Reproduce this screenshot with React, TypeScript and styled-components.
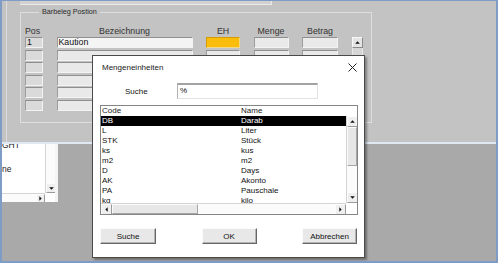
import React from 'react';
import styled, { createGlobalStyle } from 'styled-components';

const GlobalStyle = createGlobalStyle`
  html, body {
    margin: 0;
    padding: 0;
    background: #a9a9a9;
  }
  body {
    width: 498px;
    height: 263px;
    overflow: hidden;
    font-family: "Liberation Sans", Arial, sans-serif;
  }
`;

const Screen = styled.div`
  position: relative;
  box-sizing: border-box;
  width: 498px;
  height: 263px;
  background: #a9a9a9;
  border-style: solid;
  border-color: #7f9cc6;
  border-width: 1px 2px 2px 2px;
  overflow: hidden;
  display: flex;
  flex-direction: column;
`;

const FormPanel = styled.div`
  flex-shrink: 0;
  height: 141px;
  background: #c3c3c3;
  border-bottom: 2px solid #dfe8f3;
  padding-left: 4px;
  display: flex;
`;

const FormFrame = styled.div`
  flex: 1;
  border-left: 1px solid #dcdcdc;
  padding-left: 13px;
  display: flex;
  flex-direction: column;
`;

const TopStub = styled.div`
  width: 251px;
  height: 3px;
  background: #d2d2d2;
  border-bottom: 1px solid #e9e9e9;
  border-right: 1px solid #e9e9e9;
`;

const GroupBox = styled.fieldset`
  box-sizing: border-box;
  width: 352px;
  height: 115px;
  margin: 3px 0 0 0;
  padding: 8.5px 0 0 4px;
  border: 1px solid #dedede;
  min-width: 0;
`;

const GroupLegend = styled.legend`
  margin-left: 14px;
  padding: 0 3px;
  font-size: 7.2px;
  line-height: 8px;
  color: #2b2b2b;
`;

const PositionGrid = styled.div`
  display: grid;
  grid-template-columns: 18px 136px 34px 35px 36px 11px;
  grid-template-rows: 11px repeat(6, 11px);
  column-gap: 13.5px;
  row-gap: 1.5px;
`;

const ColumnLabel = styled.div<{ $align?: 'left' | 'center' }>`
  font-size: 8.8px;
  line-height: 10px;
  color: #333;
  text-align: ${p => p.$align ?? 'center'};
  align-self: end;
  white-space: nowrap;
`;

const Cell = styled.div<{ $tone?: 'pos' | 'plain' | 'light' | 'orange' }>`
  box-sizing: border-box;
  height: 11px;
  font-size: 8.8px;
  line-height: 9px;
  padding-left: 1px;
  color: #111;
  background: ${p =>
    p.$tone === 'orange' ? '#fbbd0c' : p.$tone === 'pos' ? '#dadada' : p.$tone === 'light' ? '#f4f4f4' : '#e9e9e9'};
  border-style: solid;
  border-width: 1px;
  border-color: ${p =>
    p.$tone === 'orange' ? '#d49c00 #f3d88a #f3d88a #d49c00' : '#8f8f8f #f3f3f3 #f3f3f3 #9d9d9d'};
`;

const MiniScroll = styled.div`
  grid-column: 6;
  grid-row: 2 / span 6;
  display: flex;
  flex-direction: column;
`;

const MiniButton = styled.div`
  box-sizing: border-box;
  height: 11px;
  background: #e4e4e4;
  border: 1px solid;
  border-color: #f6f6f6 #8a8a8a #8a8a8a #f6f6f6;
  display: flex;
  align-items: center;
  justify-content: center;
`;

const MiniTrack = styled.div`
  flex: 1;
  background: #d6d6d6;
  border-left: 1px solid #e8e8e8;
  border-right: 1px solid #e8e8e8;
`;

const LowerArea = styled.div`
  flex: 1;
  display: flex;
  align-items: flex-start;
`;

const SideList = styled.div`
  box-sizing: border-box;
  width: 56px;
  height: 58px;
  background: #fff;
  border-right: 3px solid #f4f4f4;
  display: grid;
  grid-template-columns: 1fr 10px;
  grid-template-rows: 1fr 9px;
  overflow: hidden;
`;

const SideListText = styled.div`
  font-size: 8.5px;
  line-height: 10px;
  color: #222;
  margin-top: -4px;
  display: flex;
  flex-direction: column;
  gap: 14px;
`;

const ScrollBar = styled.div<{ $vertical?: boolean }>`
  box-sizing: border-box;
  display: flex;
  flex-direction: ${p => (p.$vertical ? 'column' : 'row')};
  background: #fff;
  ${p => (p.$vertical ? 'border-left: 1px solid #d4d4d4;' : 'border-top: 1px solid #d4d4d4;')}
`;

const ScrollArrow = styled.div<{ $size: number }>`
  box-sizing: border-box;
  flex-shrink: 0;
  width: ${p => p.$size}px;
  height: ${p => p.$size}px;
  background: #efefef;
  border: 1px solid;
  border-color: #fdfdfd #9b9b9b #9b9b9b #fdfdfd;
  display: flex;
  align-items: center;
  justify-content: center;
`;

const ScrollThumb = styled.div<{ $vertical?: boolean }>`
  box-sizing: border-box;
  ${p => (p.$vertical ? 'height: 39px;' : 'width: 86px;')}
  background: #e7e7e7;
  border: 1px solid;
  border-color: #fafafa #a6a6a6 #a6a6a6 #fafafa;
`;

const ScrollGap = styled.div`
  flex: 1;
  background: #fbfbfb;
`;

const Corner = styled.div`
  background: #fff;
`;

const Dialog = styled.div`
  position: absolute;
  left: 90px;
  top: 54px;
  box-sizing: border-box;
  width: 273px;
  height: 203px;
  background: #fff;
  border: 1px solid #4a4a4a;
  box-shadow: 2px 2px 2px rgba(0, 0, 0, 0.35);
  display: flex;
  flex-direction: column;
  font-size: 8px;
  color: #111;
`;

const TitleBar = styled.div`
  height: 22px;
  flex-shrink: 0;
  display: flex;
  align-items: center;
  justify-content: space-between;
  padding: 0 7px 0 9px;
`;

const Title = styled.span`
  font-size: 8px;
  color: #1a1a1a;
`;

const SearchRow = styled.div`
  margin-top: 5px;
  padding-left: 32px;
  display: flex;
  align-items: center;
`;

const SearchLabel = styled.label`
  width: 52px;
  font-size: 8px;
`;

const SearchInput = styled.div`
  box-sizing: border-box;
  width: 141px;
  height: 16px;
  border-style: solid;
  border-width: 2px 1px 1px 1px;
  border-color: #a3a3a3 #e2e2e2 #e2e2e2 #b2b2b2;
  font-size: 8px;
  line-height: 12px;
  padding-left: 2px;
`;

const ListView = styled.div`
  box-sizing: border-box;
  margin: 6px 0 0 7px;
  width: 258px;
  height: 110px;
  border: 1px solid #858585;
  display: grid;
  grid-template-columns: 1fr 11px;
  grid-template-rows: 10px 1fr 11px;
  overflow: hidden;
`;

const ListHeader = styled.div`
  grid-column: 1 / span 2;
  display: flex;
  font-size: 8px;
  line-height: 9px;
  color: #222;
`;

const ListBody = styled.div`
  overflow: hidden;
`;

const ListRow = styled.div<{ $selected?: boolean }>`
  display: flex;
  height: 10px;
  font-size: 8px;
  line-height: 10px;
  background: ${p => (p.$selected ? '#000' : 'transparent')};
  color: ${p => (p.$selected ? '#fff' : '#111')};
`;

const CodeCol = styled.span`
  width: 139px;
  padding-left: 1px;
  flex-shrink: 0;
`;

const NameCol = styled.span`
  flex: 1;
`;

const ButtonRow = styled.div`
  margin-top: 13px;
  padding: 0 7px;
  display: flex;
  justify-content: space-between;
`;

const DialogButton = styled.button<{ $width: number }>`
  box-sizing: border-box;
  width: ${p => p.$width}px;
  height: 16px;
  padding: 0;
  font-family: "Liberation Sans", Arial, sans-serif;
  font-size: 8px;
  color: #111;
  background: #e8e8e8;
  border: 1px solid;
  border-color: #fbfbfb #666 #666 #fbfbfb;
  box-shadow: inset -1px -1px 0 #b4b4b4;
`;

type Dir = 'up' | 'down' | 'left' | 'right';

const Arrow = ({ dir }: { dir: Dir }) => {
  const points: Record<Dir, string> = {
    up: '0,4 3.5,0.5 7,4',
    down: '0,0.5 3.5,4 7,0.5',
    left: '4,0 0.5,3.5 4,7',
    right: '0.5,0 4,3.5 0.5,7',
  };
  const vertical = dir === 'up' || dir === 'down';
  return (
    <svg width={vertical ? 5 : 3} height={vertical ? 3 : 5} viewBox={vertical ? '0 0 7 4.5' : '0 0 4.5 7'}>
      <polygon points={points[dir]} fill="#111" />
    </svg>
  );
};

const CloseIcon = () => (
  <svg width="9" height="9" viewBox="0 0 9 9">
    <path d="M0.5 0.5 L8.5 8.5 M8.5 0.5 L0.5 8.5" stroke="#222" strokeWidth="1" />
  </svg>
);

const units = [
  { code: 'DB', name: 'Darab' },
  { code: 'L', name: 'Liter' },
  { code: 'STK', name: 'Stück' },
  { code: 'ks', name: 'kus' },
  { code: 'm2', name: 'm2' },
  { code: 'D', name: 'Days' },
  { code: 'AK', name: 'Akonto' },
  { code: 'PA', name: 'Pauschale' },
  { code: 'kg', name: 'kilo' },
];

const rows = [0, 1, 2, 3, 4, 5];

const App = () => {
  return (
    <>
      <GlobalStyle />
      <Screen>
        <FormPanel>
          <FormFrame>
            <TopStub />
            <GroupBox>
              <GroupLegend>Barbeleg Postion</GroupLegend>
              <PositionGrid>
                <ColumnLabel $align="left">Pos</ColumnLabel>
                <ColumnLabel>Bezeichnung</ColumnLabel>
                <ColumnLabel>EH</ColumnLabel>
                <ColumnLabel>Menge</ColumnLabel>
                <ColumnLabel>Betrag</ColumnLabel>
                <div />
                {rows.map(row => (
                  <React.Fragment key={row}>
                    <Cell $tone="pos" style={{ gridRow: row + 2, gridColumn: 1 }}>
                      {row === 0 ? '1' : ''}
                    </Cell>
                    <Cell $tone={row === 0 ? 'light' : 'plain'} style={{ gridRow: row + 2, gridColumn: 2 }}>
                      {row === 0 ? 'Kaution' : ''}
                    </Cell>
                    <Cell $tone={row === 0 ? 'orange' : 'plain'} style={{ gridRow: row + 2, gridColumn: 3 }} />
                    <Cell style={{ gridRow: row + 2, gridColumn: 4 }} />
                    <Cell style={{ gridRow: row + 2, gridColumn: 5 }} />
                  </React.Fragment>
                ))}
                <MiniScroll>
                  <MiniButton>
                    <Arrow dir="up" />
                  </MiniButton>
                  <MiniTrack />
                </MiniScroll>
              </PositionGrid>
            </GroupBox>
          </FormFrame>
        </FormPanel>

        <LowerArea>
          <SideList>
            <SideListText>
              <span>GHT</span>
              <span>ne</span>
            </SideListText>
            <ScrollBar $vertical>
              <ScrollGap />
              <ScrollArrow $size={10}>
                <Arrow dir="down" />
              </ScrollArrow>
            </ScrollBar>
            <ScrollBar>
              <ScrollGap />
              <ScrollArrow $size={9}>
                <Arrow dir="right" />
              </ScrollArrow>
            </ScrollBar>
            <Corner />
          </SideList>
        </LowerArea>

        <Dialog>
          <TitleBar>
            <Title>Mengeneinheiten</Title>
            <CloseIcon />
          </TitleBar>
          <SearchRow>
            <SearchLabel>Suche</SearchLabel>
            <SearchInput>%</SearchInput>
          </SearchRow>
          <ListView>
            <ListHeader>
              <CodeCol>Code</CodeCol>
              <NameCol>Name</NameCol>
            </ListHeader>
            <ListBody>
              {units.map((unit, index) => (
                <ListRow key={unit.code} $selected={index === 0}>
                  <CodeCol>{unit.code}</CodeCol>
                  <NameCol>{unit.name}</NameCol>
                </ListRow>
              ))}
            </ListBody>
            <ScrollBar $vertical>
              <ScrollArrow $size={11}>
                <Arrow dir="up" />
              </ScrollArrow>
              <ScrollThumb $vertical />
              <ScrollGap />
              <ScrollArrow $size={11}>
                <Arrow dir="down" />
              </ScrollArrow>
            </ScrollBar>
            <ScrollBar>
              <ScrollArrow $size={11}>
                <Arrow dir="left" />
              </ScrollArrow>
              <ScrollThumb />
              <ScrollGap />
              <ScrollArrow $size={11}>
                <Arrow dir="right" />
              </ScrollArrow>
            </ScrollBar>
            <Corner />
          </ListView>
          <ButtonRow>
            <DialogButton $width={56}>Suche</DialogButton>
            <DialogButton $width={55}>OK</DialogButton>
            <DialogButton $width={55}>Abbrechen</DialogButton>
          </ButtonRow>
        </Dialog>
      </Screen>
    </>
  );
};

export default App;
